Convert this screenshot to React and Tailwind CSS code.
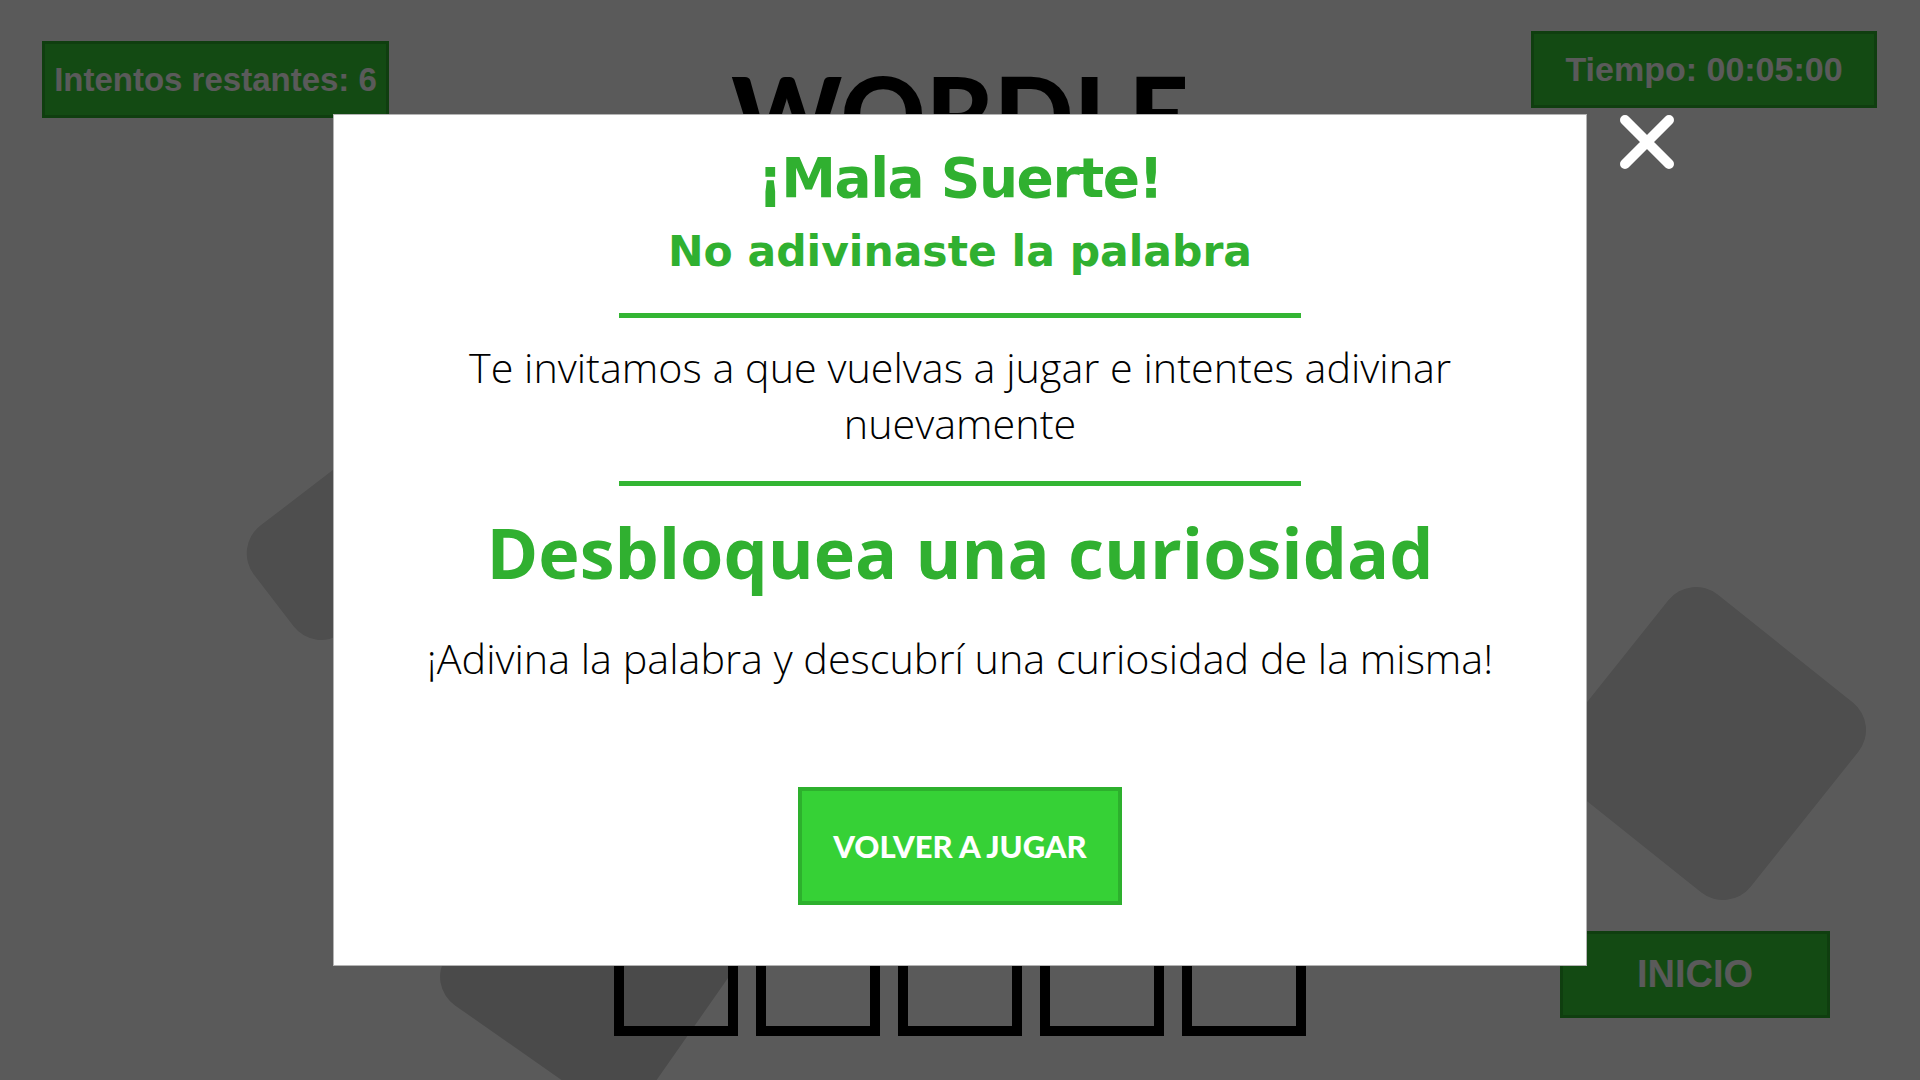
const rows = [0, 1, 2, 3, 4, 5];
const cols = [0, 1, 2, 3, 4];

const StatBox = ({ className, children }) => (
  <div
    className={`flex items-center justify-center border-[3px] border-[#2db02d] bg-[#36d136] font-bold text-white ${className}`}
  >
    {children}
  </div>
);

export default function App() {
  return (
    <div className="relative h-screen w-full overflow-hidden bg-white font-['Liberation_Sans',Arial,sans-serif]">
      {/* decorative tiles behind the board */}
      <div className="absolute left-[251px] top-[466px] h-[135px] w-[220px] -rotate-[37.5deg] rounded-[35px] bg-[#dcdcdc]" />
      <div className="absolute left-[1588px] top-[622px] h-[243px] w-[243px] rotate-[38.6deg] rounded-[35px] bg-[#dcdcdc]" />
      <div className="absolute left-[474px] top-[834px] h-[243px] w-[243px] rotate-[35deg] rounded-[35px] bg-[#d2d2d2]" />

      <div className="relative flex h-full pl-[42px] pr-[43px]">
        <div className="w-[347px] pt-[41px]">
          <StatBox className="h-[77px] w-[347px] text-[33px]">Intentos restantes: 6</StatBox>
        </div>

        <div className="flex flex-1 flex-col items-center pt-[60px] pb-[44px]">
          <h1 className="font-['Lato',sans-serif] text-[105px] font-black leading-none text-black">WORDLE</h1>
          <div className="mt-auto grid grid-cols-5 gap-[18px]">
            {rows.map((r) =>
              cols.map((c) => (
                <div key={`${r}-${c}`} className="h-[124px] w-[124px] border-[10px] border-black" />
              ))
            )}
          </div>
        </div>

        <div className="flex w-[346px] flex-col items-end justify-between pt-[31px] pb-[62px]">
          <StatBox className="h-[77px] w-[346px] text-[34px]">Tiempo: 00:05:00</StatBox>
          <button className="mr-[47px] flex h-[87px] w-[270px] items-center justify-center border-[3px] border-[#2db02d] bg-[#36d136] text-[38px] font-bold text-white">
            INICIO
          </button>
        </div>
      </div>

      {/* result modal */}
      <div className="fixed inset-0 flex items-center justify-center bg-black/[0.647]">
        <div className="relative flex h-[852px] w-[1254px] flex-col items-center border border-[#b4b4b4] bg-white px-[40px] pt-[36px] text-center">
          <button className="absolute left-[calc(100%+34px)] top-0 text-white" aria-label="Cerrar">
            <svg width="54" height="54" viewBox="0 0 54 54" fill="none" stroke="currentColor" strokeWidth="10" strokeLinecap="round">
              <path d="M5 5L49 49M49 5L5 49" />
            </svg>
          </button>

          <h2 className="font-['DejaVu_Sans',sans-serif] text-[55px] font-bold leading-[54px] tracking-[-1.5px] text-[#30b030]">
            ¡Mala Suerte!
          </h2>
          <h3 className="mt-[26px] font-['DejaVu_Sans',sans-serif] text-[42.5px] font-bold leading-[42px] text-[#30b030]">
            No adivinaste la palabra
          </h3>

          <div className="mt-[40px] h-[5px] w-[682px] bg-[#33b533]" />

          <p className="mt-[21px] font-['Open_Sans',sans-serif] text-[41.3px] font-light leading-[56px] text-black">
            Te invitamos a que vuelvas a jugar e intentes adivinar nuevamente
          </p>

          <div className="mt-[30px] h-[5px] w-[682px] bg-[#33b533]" />

          <h2 className="mt-[31px] font-['Open_Sans',sans-serif] text-[70px] font-bold leading-[70px] text-[#30b030]">
            Desbloquea una curiosidad
          </h2>
          <p className="mt-[43px] font-['Open_Sans',sans-serif] text-[41.3px] font-light leading-[56px] text-black">
            ¡Adivina la palabra y descubrí una curiosidad de la misma!
          </p>

          <button className="mt-[101px] flex h-[118px] w-[324px] shrink-0 items-center justify-center border-4 border-[#2db02d] bg-[#36d136] font-['Lato',sans-serif] text-[31px] font-black text-white">
            VOLVER A JUGAR
          </button>
        </div>
      </div>
    </div>
  );
}
